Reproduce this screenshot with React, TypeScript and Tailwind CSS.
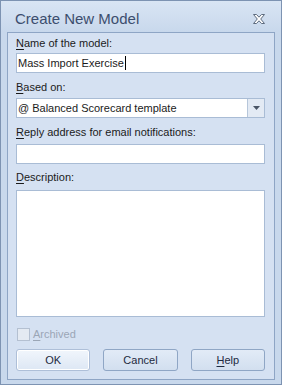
import React from "react";

const font = { fontFamily: '"Liberation Sans", Arial, sans-serif' };

function U({ children }: { children: React.ReactNode }) {
  return <span className="underline underline-offset-[2px] decoration-[1px]">{children}</span>;
}

export default function App() {
  return (
    <div
      className="w-[282px] h-[385px] border border-[#7d93b2] bg-[#c8d8ec] flex flex-col"
      style={font}
    >
      <div className="h-[31px] flex items-start justify-between bg-gradient-to-b from-[#d9e5f4] to-[#c8d8ec]">
        <div className="pl-[14px] pt-[9px] text-[15px] leading-[18px] text-[#3c4e6e]">Create New Model</div>
        <svg width="14" height="10" viewBox="0 0 14 10" className="mt-[13px] mr-[15px]">
          <path
            d="M1.5 0.5 H4.5 L7 3.2 L9.5 0.5 H12.5 L8.7 5 L12.5 9.5 H9.5 L7 6.8 L4.5 9.5 H1.5 L5.3 5 Z"
            fill="#ffffff"
            stroke="#5d6b7e"
            strokeWidth="1"
            strokeLinejoin="round"
          />
        </svg>
      </div>
      <div className="mx-[6px] h-[348px] border border-[#8ea5c5] bg-[#d5e1f2] pl-[8px] pr-[9px] pt-[4px] flex flex-col text-[11px] leading-[13px] text-[#1b1b1b]">
        <div className="h-[13px]"><U>N</U>ame of the model:</div>
        <div className="mt-[3px] h-[20px] border border-[#a9bcd5] bg-white flex items-center pl-[1px]">
          <span>Mass Import Exercise</span>
          <span className="w-px h-[14px] bg-black ml-[1px]" />
        </div>
        <div className="mt-[8px] h-[13px]"><U>B</U>ased on:</div>
        <div className="mt-[4px] h-[20px] border border-[#a9bcd5] bg-white flex">
          <div className="flex-1 flex items-center pl-[1px]">@ Balanced Scorecard template</div>
          <div className="w-[17px] border-l border-[#b6c6da] bg-[#e3eaf4] flex items-center justify-center">
            <svg width="7" height="4" viewBox="0 0 7 4">
              <path d="M0 0 H7 L3.5 4 Z" fill="#4a5566" />
            </svg>
          </div>
        </div>
        <div className="mt-[8px] h-[13px]"><U>R</U>eply address for email notifications:</div>
        <div className="mt-[5px] h-[20px] border border-[#a9bcd5] bg-white" />
        <div className="mt-[7px] h-[13px]"><U>D</U>escription:</div>
        <div className="mt-[6px] h-[127px] border border-[#a9bcd5] bg-white" />
        <div className="mt-[11px] h-[13px] flex items-center pl-[1px]">
          <div className="w-[13px] h-[13px] border border-[#b4c0d1] bg-[#e4eaf2]" />
          <span className="ml-[3px] text-[#9ba6b6]"><U>A</U>rchived</span>
        </div>
        <div className="mt-[8px] grid grid-cols-3 gap-[13px]">
          <button className="h-[22px] rounded-[3px] border border-[#aebfd8] bg-gradient-to-b from-[#f1f6fc] to-[#dde7f4] shadow-[inset_0_0_0_1px_#ffffff] text-[11px] text-[#1e2a3e]">
            OK
          </button>
          <button className="h-[22px] rounded-[3px] border border-[#8fa6c5] bg-gradient-to-b from-[#e2ebf7] to-[#d2dfef] text-[11px] text-[#1e2a3e]">
            Cancel
          </button>
          <button className="h-[22px] rounded-[3px] border border-[#8fa6c5] bg-gradient-to-b from-[#e2ebf7] to-[#d2dfef] text-[11px] text-[#1e2a3e]">
            <U>H</U>elp
          </button>
        </div>
      </div>
    </div>
  );
}
